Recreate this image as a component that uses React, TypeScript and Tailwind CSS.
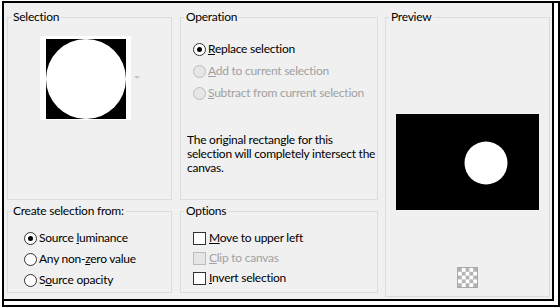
import React from "react";

type RadioProps = { checked?: boolean; disabled?: boolean };

function Radio({ checked, disabled }: RadioProps) {
  return (
    <span
      className={
        disabled
          ? "flex h-[13px] w-[13px] shrink-0 items-center justify-center rounded-full border border-[#bcbcbc] bg-[#e6e6e6]"
          : "flex h-[13px] w-[13px] shrink-0 items-center justify-center rounded-full border border-[#333333] bg-white"
      }
    >
      {checked && <span className="h-[5px] w-[5px] rounded-full bg-black" />}
    </span>
  );
}

function Check({ disabled }: { disabled?: boolean }) {
  return (
    <span
      className={
        disabled
          ? "h-[13px] w-[13px] shrink-0 border border-[#bcbcbc] bg-[#e6e6e6]"
          : "h-[13px] w-[13px] shrink-0 border border-[#333333] bg-white"
      }
    />
  );
}

function Group({
  title,
  className,
  children,
}: {
  title: string;
  className: string;
  children: React.ReactNode;
}) {
  return (
    <fieldset className={`border border-[#dcdcdc] ${className}`}>
      <legend className="ml-[3px] px-[2px] leading-[16px]">{title}</legend>
      {children}
    </fieldset>
  );
}

function Checker() {
  const cells = [];
  for (let r = 0; r < 5; r++) {
    for (let c = 0; c < 5; c++) {
      if ((r + c) % 2 === 0) {
        cells.push(<rect key={`${r}-${c}`} x={1 + c * 3.8} y={1 + r * 3.8} width={3.8} height={3.8} fill="#b4b4b4" />);
      }
    }
  }
  return (
    <svg width="21" height="21" viewBox="0 0 21 21">
      <rect x="0.5" y="0.5" width="20" height="20" fill="#ffffff" stroke="#a8a8a8" />
      {cells}
    </svg>
  );
}

export default function App() {
  return (
    <div className="h-[307px] w-[560px] bg-white pl-[2px] pt-[1px] font-['Segoe_UI','Lato',sans-serif] text-[12px] tracking-[-0.25px] text-black">
      <div className="h-[306px] w-[558px] border-2 border-black">
        <div className="flex h-[298px] w-[550px] border-b-2 border-r-2 border-black bg-[#f0f0f0] pl-[3px] pt-[6px]">
          {/* left column */}
          <div className="flex w-[165px] flex-col">
            <Group title="Selection" className="h-[191px]">
              <div className="flex items-center pl-[32px] pt-[11px]">
                <div className="h-[84px] w-[91px] bg-white pl-[6px] pt-[3px]">
                  <svg width="80" height="80" viewBox="0 0 80 80">
                    <rect width="80" height="80" fill="#000" />
                    <circle cx="40" cy="40" r="40" fill="#fff" />
                  </svg>
                </div>
                <svg className="ml-[3px]" width="6" height="4" viewBox="0 0 6 4">
                  <path d="M0 0 L6 0 L3 3 Z" fill="#c4c4c4" />
                </svg>
              </div>
            </Group>
            <Group title="Create selection from:" className="mt-[3px] h-[90px]">
              <div className="flex flex-col gap-[5px] pl-[16px] pt-[11px]">
                <label className="flex h-[16px] items-center gap-[2px]">
                  <Radio checked />
                  <span>
                    Source <u>l</u>uminance
                  </span>
                </label>
                <label className="flex h-[16px] items-center gap-[2px]">
                  <Radio />
                  <span>
                    Any non-<u>z</u>ero value
                  </span>
                </label>
                <label className="flex h-[16px] items-center gap-[2px]">
                  <Radio />
                  <span>
                    S<u>o</u>urce opacity
                  </span>
                </label>
              </div>
            </Group>
          </div>

          {/* middle column */}
          <div className="ml-[8px] flex w-[198px] flex-col">
            <Group title="Operation" className="h-[191px]">
              <div className="flex flex-col gap-[6px] pl-[12px] pt-[16px]">
                <label className="flex h-[16px] items-center gap-[2px]">
                  <Radio checked />
                  <span>
                    <u>R</u>eplace selection
                  </span>
                </label>
                <label className="flex h-[16px] items-center gap-[2px] text-[#a0a0a0]">
                  <Radio disabled />
                  <span>
                    <u>A</u>dd to current selection
                  </span>
                </label>
                <label className="flex h-[16px] items-center gap-[2px] text-[#a0a0a0]">
                  <Radio disabled />
                  <span>
                    <u>S</u>ubtract from current selection
                  </span>
                </label>
              </div>
              <p className="whitespace-nowrap pl-[6px] pt-[32px] leading-[14px]">
                The original rectangle for this
                <br />
                selection will completely intersect the
                <br />
                canvas.
              </p>
            </Group>
            <Group title="Options" className="mt-[3px] h-[90px]">
              <div className="flex flex-col gap-[4px] pl-[12px] pt-[11px]">
                <label className="flex h-[16px] items-center gap-[3px]">
                  <Check />
                  <span>
                    <u>M</u>ove to upper left
                  </span>
                </label>
                <label className="flex h-[16px] items-center gap-[3px] text-[#a0a0a0]">
                  <Check disabled />
                  <span>
                    <u>C</u>lip to canvas
                  </span>
                </label>
                <label className="flex h-[16px] items-center gap-[3px]">
                  <Check />
                  <span>
                    <u>I</u>nvert selection
                  </span>
                </label>
              </div>
            </Group>
          </div>

          {/* right column */}
          <div className="ml-[7px] w-[165px]">
            <Group title="Preview" className="h-[288px]">
              <div className="flex flex-col items-center pt-[89px]">
                <svg width="143" height="96" viewBox="0 0 143 96">
                  <rect width="143" height="96" fill="#000" />
                  <circle cx="90" cy="49" r="21.5" fill="#fff" />
                </svg>
                <div className="mt-[57px] h-[21px] w-[21px]">
                  <Checker />
                </div>
              </div>
            </Group>
          </div>
        </div>
      </div>
    </div>
  );
}
